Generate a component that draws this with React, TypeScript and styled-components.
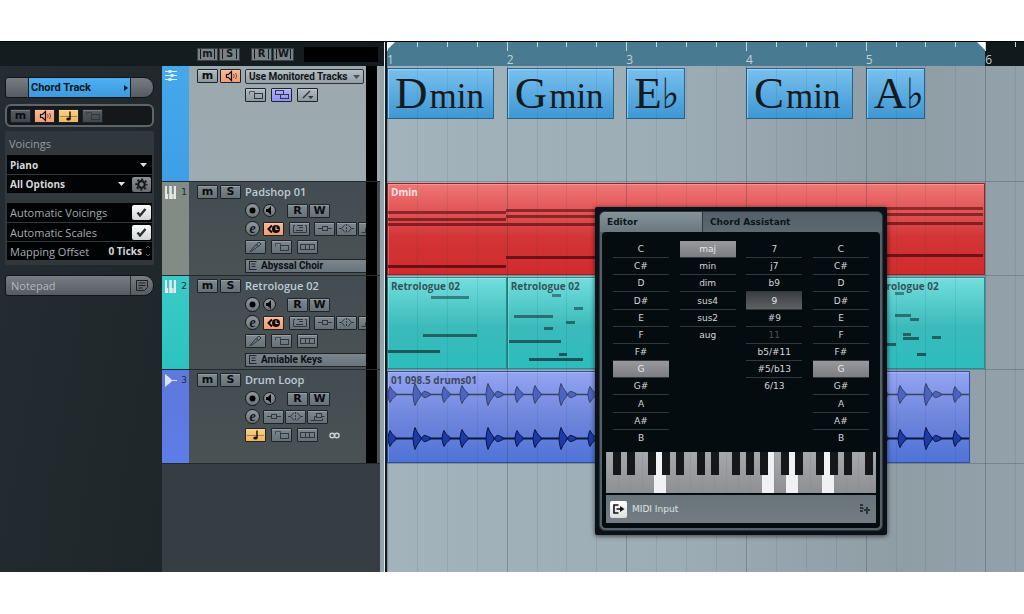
import React from "react";
import styled, { createGlobalStyle, css } from "styled-components";

const UI = `"Open Sans", "Noto Sans", sans-serif`;
const GRANDE = `"DejaVu Sans", "Noto Sans", sans-serif`;
const COMPACT = `Roboto, "Open Sans", sans-serif`;

const GlobalStyle = createGlobalStyle`
  *, *::before, *::after { box-sizing: border-box; }
  body { margin: 0; background: #fff; font-family: ${UI}; font-size: 11px; }
  button, input, select { font: inherit; color: inherit; margin: 0; padding: 0; border: 0; border-radius: 0; background: none; }
  button { cursor: pointer; }
  svg { display: block; }
`;

/* ---------- shell ---------- */

const Page = styled.div`
  min-height: 100vh;
  padding: 41px 0 42px;
  display: flex;
`;

const Workspace = styled.main`
  flex: 1;
  min-width: 0;
  display: flex;
  border-top: 1px solid #000;
  background: #22292e;
`;

/* ---------- icons ---------- */

type IconName =
  | "speaker" | "note" | "lock" | "layers" | "wand" | "freeze" | "list"
  | "insert" | "eq" | "sends" | "tool" | "lanes";

const icons: Record<IconName, React.ReactNode> = {
  speaker: (
    <>
      <path d="M5.500 4.500h2l3-3v9l-3-3h-2z" strokeWidth="1.2" />
      <path d="M12.500 4q1.500 2 0 4M14.500 3q2.400 3 0 6" strokeOpacity=".55" />
    </>
  ),
  note: (
    <>
      <path d="M1 6.500h17" strokeOpacity=".35" />
      <path d="M11 1.500v7.500" strokeWidth="1.4" />
      <ellipse cx="9.500" cy="9" rx="2.200" ry="1.500" fill="currentColor" stroke="none" />
    </>
  ),
  lock: (
    <>
      <path d="M3.500 5.500V2.500h5v2" strokeOpacity=".7" />
      <rect x="8.500" y="4.500" width="8" height="5" />
    </>
  ),
  layers: (
    <>
      <rect x="3.500" y="1.500" width="8" height="4" />
      <rect x="8.500" y="5.500" width="8" height="4" />
    </>
  ),
  wand: (
    <>
      <path d="M5 9l7-7" strokeWidth="1.4" />
      <path d="M10 7h5.500L12.800 10z" fill="currentColor" stroke="none" />
    </>
  ),
  freeze: (
    <>
      <path d="M8 2.500L4.500 6 8 9.500" strokeWidth="2" />
      <circle cx="12" cy="6" r="4" fill="currentColor" stroke="none" />
      <path d="M12 3.500v3h2.500" stroke="#f5a77f" strokeWidth="1.200" />
    </>
  ),
  list: (
    <>
      <path d="M5 2.500H3.500v7h13v-7H15" />
      <path d="M7 2.500h6M9 4.500h4M6 7.500h7" />
    </>
  ),
  insert: (
    <>
      <path d="M3 5.500h4.500M12.500 5.500H17" />
      <rect x="7.500" y="3.500" width="5" height="4" />
    </>
  ),
  eq: (
    <>
      <path d="M2 5.500h2.500M14.500 5.500h2.500M8 1.500L4.500 5.500 8 9.500M11 1.500l3.500 4L11 9.500" />
      <path d="M9.500 1v9" strokeDasharray="2 1" />
    </>
  ),
  sends: (
    <>
      <path d="M2.500 9.500h12V7.500M6.500 9.500v-4h2M13.500 5.500h3" />
      <rect x="8.500" y="2.500" width="5" height="4" />
    </>
  ),
  tool: (
    <>
      <path d="M4 10.500l6-7 2 2-7 5z" />
      <path d="M10.500 3L13 1l2 2-2.500 2.500z" />
    </>
  ),
  lanes: (
    <>
      <rect x="2.500" y="3.500" width="14" height="5" />
      <path d="M7.500 3.500v5M11.500 3.500v5" />
    </>
  ),
};

const Icon = ({ name }: { name: IconName }) => (
  <svg width="19" height="12" viewBox="0 0 19 12" fill="none" stroke="currentColor" aria-hidden="true">
    {icons[name]}
  </svg>
);

/* ---------- shared controls ---------- */

type Tone = "steel" | "light" | "dark" | "orange" | "yellow" | "violet";

const tones: Record<Tone, string> = {
  steel: "linear-gradient(#7e888f, #667077)",
  light: "linear-gradient(#b0bbc2, #8d989f)",
  dark: "linear-gradient(#545b61, #41484d)",
  orange: "linear-gradient(#fbb893, #f49c70)",
  yellow: "linear-gradient(#f9cf85, #efb75c)",
  violet: "linear-gradient(#b0b2ff, #8f92f4)",
};

const Key = styled.button<{ $tone?: Tone; $joined?: boolean; $dim?: boolean }>`
  flex: none;
  width: 21px;
  height: 14px;
  display: grid;
  place-items: center;
  overflow: hidden;
  border: 1px solid #1d2326;
  border-radius: 1px;
  background: ${(p) => tones[p.$tone ?? "steel"]};
  box-shadow: inset 0 1px 0 rgba(255, 255, 255, 0.2);
  color: ${(p) => (p.$dim ? "#30383d" : "#0b0d0f")};
  font: 700 11px/10px ${GRANDE};
  ${(p) => p.$joined && css`& + & { margin-left: 1px; }`}
`;

const RoundKey = styled.button<{ $small?: boolean }>`
  flex: none;
  width: ${(p) => (p.$small ? 13 : 15)}px;
  height: ${(p) => (p.$small ? 13 : 15)}px;
  display: grid;
  place-items: center;
  border: 1px solid #14181a;
  border-radius: 50%;
  background: linear-gradient(#8f989e, #69737a);
  color: #101214;
  font: italic 700 14px/10px "Liberation Serif", serif;
`;

const Stack = styled.span`
  display: grid;
  align-items: center;
  & > * { grid-area: 1 / 1; }
  & > svg { justify-self: end; pointer-events: none; }
`;

/* ---------- inspector ---------- */

const Inspector = styled.aside`
  flex: 0 0 162px;
  background: linear-gradient(100deg, #262d32, #1e262a);
`;

const Strip = styled.div`
  height: 24px;
  background: #141c20;
`;

const InspectorBody = styled.div`
  padding: 11px 8px 0 5px;
  display: flex;
  flex-direction: column;
`;

const Pill = styled.div`
  display: flex;
  height: 21px;
  border: 1px solid #101416;
  border-radius: 3px 10px 10px 3px;
  overflow: hidden;
  background: linear-gradient(#777d82, #555b60);
`;

const PillCap = styled.button`
  width: 22px;
  display: grid;
  place-items: center;
  color: #1c2023;
`;

const PillName = styled.button`
  flex: 1;
  display: flex;
  align-items: center;
  justify-content: space-between;
  padding: 0 2px;
  border: solid #14181a;
  border-width: 0 1px;
  background: linear-gradient(#4fb0f0, #3c9ae0);
  color: #0a1720;
  font: 700 11px/14px ${COMPACT};
`;

const NotepadName = styled.button`
  flex: 1;
  padding-left: 5px;
  border-right: 1px solid #2a2f32;
  text-align: left;
  color: #b4babd;
`;

const ControlBox = styled.div`
  height: 23px;
  margin-top: 6px;
  padding: 0 3px;
  display: flex;
  align-items: center;
  gap: 2px;
  border: 2px solid #5d6569;
  border-radius: 6px;
  background: #14181b;
`;

const Section = styled.section`
  margin: 4px 0 10px;
  padding: 1px 2px 5px;
  border-radius: 2px;
  background: #31383d;
`;

const SectionTitle = styled.h2`
  margin: 0;
  padding-left: 2px;
  font: 400 11px/23px ${UI};
  color: #949b9f;
`;

const Fields = styled.div`
  margin-bottom: 10px;
  background: #020304;
  &:last-child { margin-bottom: 0; }
`;

const Field = styled.div`
  height: 19px;
  padding: 0 1px 0 3px;
  display: flex;
  align-items: center;
  gap: 3px;
  color: #a4abaf;
  & + & { border-top: 1px solid #32383b; }
  label { flex: 1; white-space: nowrap; }
`;

const FieldPicker = styled(Stack)`
  flex: 1;
  padding-right: 4px;
`;

const FieldSelect = styled.select`
  width: 100%;
  appearance: none;
  outline: 0;
  font-size: 10px;
  font-weight: 700;
  color: #d3d8da;
`;

const GearButton = styled.button`
  width: 19px;
  height: 15px;
  display: grid;
  place-items: center;
  border-radius: 2px;
  background: linear-gradient(#8a9094, #666c70);
  color: #14171a;
`;

const Check = styled(Stack)`
  width: 19px;
  height: 15px;
  & > svg { justify-self: center; }
  input {
    appearance: none;
    width: 19px;
    height: 15px;
    border-radius: 2px;
    background: linear-gradient(#fafafa, #d2d5d7);
  }
`;

const OffsetInput = styled.input`
  width: 40px;
  text-align: right;
  font-size: 10px;
  font-weight: 700;
  color: #d3d8da;
`;

const Caret = ({ color = "#dfe3e5" }: { color?: string }) => (
  <svg width="7" height="4" viewBox="0 0 7 4" aria-hidden="true">
    <path d="M0 0h7L3.500 4z" fill={color} />
  </svg>
);

const CheckField = ({ id, text }: { id: string; text: string }) => (
  <Field>
    <label htmlFor={id}>{text}</label>
    <Check>
      <input id={id} type="checkbox" defaultChecked />
      <svg width="11" height="9" viewBox="0 0 11 9" fill="none" stroke="#2b3033" strokeWidth="2.400">
        <path d="M1.500 4.500L4 7.500 9.500 1" />
      </svg>
    </Check>
  </Field>
);

const InspectorPanel = () => (
  <Inspector>
    <Strip />
    <InspectorBody>
      <Pill>
        <PillCap aria-label="Edit track" />
        <PillName>
          Chord Track
          <svg width="4" height="6" viewBox="0 0 4 6"><path d="M0 0l4 3-4 3z" fill="#0a1720" /></svg>
        </PillName>
        <PillCap aria-label="Track options" />
      </Pill>
      <ControlBox>
        <Key $tone="dark" aria-label="Mute">m</Key>
        <Key $tone="orange" aria-label="Acoustic feedback"><Icon name="speaker" /></Key>
        <Key $tone="yellow" aria-label="Musical mode"><Icon name="note" /></Key>
        <Key $tone="dark" $dim aria-label="Lock"><Icon name="lock" /></Key>
      </ControlBox>
      <Section>
        <SectionTitle>Voicings</SectionTitle>
        <Fields>
          <Field>
            <FieldPicker>
              <FieldSelect aria-label="Voicing library"><option>Piano</option></FieldSelect>
              <Caret />
            </FieldPicker>
          </Field>
          <Field>
            <FieldPicker>
              <FieldSelect aria-label="Voicing subset"><option>All Options</option></FieldSelect>
              <Caret />
            </FieldPicker>
            <GearButton aria-label="Configure voicings">
              <svg width="13" height="13" viewBox="0 0 13 13" fill="none" stroke="currentColor">
                <circle cx="6.500" cy="6.500" r="3.300" strokeWidth="2.200" />
                <circle cx="6.500" cy="6.500" r="5.200" strokeWidth="1.800" strokeDasharray="2 2.084" strokeDashoffset="1" />
              </svg>
            </GearButton>
          </Field>
        </Fields>
        <Fields>
          <CheckField id="auto-voicings" text="Automatic Voicings" />
          <CheckField id="auto-scales" text="Automatic Scales" />
          <Field>
            <label htmlFor="offset">Mapping Offset</label>
            <OffsetInput id="offset" defaultValue="0 Ticks" />
            <svg width="6" height="12" viewBox="0 0 6 12" fill="none" stroke="#5a6165">
              <path d="M1 3l2-2 2 2M1 9l2 2 2-2" />
            </svg>
          </Field>
        </Fields>
      </Section>
      <Pill>
        <NotepadName>Notepad</NotepadName>
        <PillCap aria-label="Open notepad">
          <svg width="12" height="11" viewBox="0 0 12 11" fill="none" stroke="currentColor">
            <path d="M.5.5h11v7l-3 3h-8zM2.500 3h7M2.500 5.500h7M2.500 8h4" />
          </svg>
        </PillCap>
      </Pill>
    </InspectorBody>
  </Inspector>
);

/* ---------- track list ---------- */

const TrackList = styled.section`
  flex: 0 0 218px;
  background: #363e44;
`;

const ListHeader = styled.header`
  height: 24px;
  padding: 0 2px 0 35px;
  display: flex;
  align-items: center;
  background: #141c20;
`;

const HeaderKey = styled.button`
  flex: none;
  width: 21px;
  height: 13px;
  margin-right: 1px;
  background: #7b8285;
  border: 1px solid #3b4245;
  color: #14191c;
  font: 700 10px/10px ${GRANDE};
  text-align: center;
  white-space: nowrap;
  &:nth-of-type(2) { margin-right: 11px; }
`;

const HeaderGlyph = styled.span`
  display: block;
  margin: 0 2px;
  border: solid #14191c;
  border-width: 0 1px;
`;

const Counter = styled.output`
  flex: 1;
  height: 15px;
  margin-left: 9px;
  background: #000;
`;

const TrackRow = styled.article<{ $selected?: boolean }>`
  height: ${(p) => (p.$selected ? 116 : 94)}px;
  display: grid;
  grid-template-columns: 27px 1fr 11px 3px;
  background: ${(p) => (p.$selected ? "linear-gradient(#9ba8ae, #9eabb1)" : "linear-gradient(#434c52, #4b5254)")};
  border-bottom: 1px solid #23292c;
`;

const ColorTab = styled.div<{ $color: string }>`
  padding: 4px 2px 0 3px;
  display: flex;
  align-items: flex-start;
  justify-content: space-between;
  background: ${(p) => p.$color};
  font: 9px/12px ${GRANDE};
  color: #262c2e;
`;

const Meter = styled.div`background: #000;`;

const TrackBody = styled.div`
  padding-left: 8px;
  display: grid;
  grid-template-columns: 48px 1fr;
  overflow: hidden;
`;

const MuteSolo = styled.div`
  padding-top: 3px;
  display: flex;
  align-items: flex-start;
  gap: 1px;
`;

const Lines = styled.div`
  height: 93px;
  padding-top: 1px;
  display: grid;
  grid-template-rows: repeat(5, 1fr);
  min-width: 0;
`;

const ChordLines = styled.div`
  padding-top: 3px;
  display: flex;
  flex-direction: column;
  align-items: flex-start;
  gap: 4px;
`;

const Line = styled.div<{ $gap?: number }>`
  display: flex;
  align-items: center;
  gap: ${(p) => p.$gap ?? 3}px;
  min-width: 0;
`;

const KeyGroup = styled.div<{ $indent?: number }>`
  display: flex;
  margin-left: ${(p) => p.$indent ?? 0}px;
`;

const TrackName = styled.h3`
  margin: 0;
  font: 600 11px/14px ${UI};
  color: #bccbd4;
`;

const Preset = styled.button`
  flex: 1;
  height: 14px;
  padding-left: 3px;
  display: flex;
  align-items: center;
  gap: 4px;
  border: 1px solid #1d2326;
  border-right: 0;
  background: linear-gradient(#7b858c, #69737b);
  font: 700 10px/12px ${COMPACT};
  color: #0c0f11;
`;

const SourcePicker = styled(Stack)`
  width: 119px;
  height: 15px;
  padding: 0 3px 0 3px;
  border: 1px solid #2b3135;
  border-radius: 2px;
  background: linear-gradient(#b3bec5, #939ea5);
  select {
    appearance: none;
    width: 100%;
    height: 13px;
    font: 700 10px/13px ${COMPACT};
    color: #111518;
  }
`;

const PianoIcon = () => (
  <svg width="11" height="13" viewBox="0 0 11 13" fill="#e3e8e8" aria-hidden="true">
    <path d="M0 0h2v8h1.200v5H0zM4.200 0h2.600v8h1v5H4.200V8zM8.800 0H11v13H8.300V8h.5z" />
  </svg>
);

const WaveIcon = () => (
  <svg width="12" height="13" viewBox="0 0 12 13" fill="#dbe2ff" aria-hidden="true">
    <path d="M0 0l5 4 2 2h5v1H7L5 9l-5 4z" />
  </svg>
);

const ChordIcon = () => (
  <svg width="12" height="11" viewBox="0 0 12 11" fill="#d9edfb" stroke="#d9edfb" aria-hidden="true">
    <path d="M0 1.500h12M0 5.500h12M0 9.500h12" strokeWidth="1" />
    <ellipse cx="5" cy="1.500" rx="2" ry="1" /><ellipse cx="7" cy="5.500" rx="2" ry="1" /><ellipse cx="5" cy="9.500" rx="2" ry="1" />
  </svg>
);

type Track = { no: number; name: string; color: string; preset?: string };

const tracks: Track[] = [
  { no: 1, name: "Padshop 01", color: "#838b86", preset: "Abyssal Choir" },
  { no: 2, name: "Retrologue 02", color: "linear-gradient(#3acbc8, #2cc3bf)", preset: "Amiable Keys" },
  { no: 3, name: "Drum Loop", color: "linear-gradient(#5f78dc, #5d7de8)" },
];

const MixKeys = () => (
  <>
    <Key $dim $joined aria-label="Inserts"><Icon name="insert" /></Key>
    <Key $dim $joined aria-label="Equalizer"><Icon name="eq" /></Key>
    <Key $dim $joined aria-label="Sends"><Icon name="sends" /></Key>
  </>
);

const TrackItem = ({ track }: { track: Track }) => (
  <TrackRow>
    <ColorTab $color={track.color}>
      {track.preset ? <PianoIcon /> : <WaveIcon />}
      {track.no}
    </ColorTab>
    <TrackBody>
      <MuteSolo>
        <Key aria-label="Mute">m</Key>
        <Key aria-label="Solo">S</Key>
      </MuteSolo>
      <Lines>
        <Line><TrackName>{track.name}</TrackName></Line>
        <Line>
          <RoundKey aria-label="Record enable">
            <svg width="7" height="7" viewBox="0 0 7 7"><circle cx="3.500" cy="3.500" r="3" /></svg>
          </RoundKey>
          <RoundKey $small aria-label="Monitor">
            <svg width="7" height="9" viewBox="0 0 7 9"><path d="M0 3h2l3-3v9L2 6H0z" /></svg>
          </RoundKey>
          <KeyGroup $indent={8}>
            <Key $joined aria-label="Read automation">R</Key>
            <Key $joined aria-label="Write automation">W</Key>
          </KeyGroup>
        </Line>
        <Line>
          <RoundKey aria-label="Edit channel settings">e</RoundKey>
          {track.preset ? (
            <>
              <Key $tone="orange" aria-label="Freeze"><Icon name="freeze" /></Key>
              <KeyGroup $indent={2}><Key $dim aria-label="Input transformer"><Icon name="list" /></Key></KeyGroup>
              <KeyGroup $indent={1}><MixKeys /></KeyGroup>
            </>
          ) : (
            <KeyGroup><MixKeys /></KeyGroup>
          )}
        </Line>
        <Line $gap={4}>
          {track.preset ? (
            <Key $dim aria-label="Drum map"><Icon name="tool" /></Key>
          ) : (
            <Key $tone="yellow" aria-label="Musical mode"><Icon name="note" /></Key>
          )}
          <Key $dim aria-label="Lock"><Icon name="lock" /></Key>
          <Key $dim aria-label="Show lanes"><Icon name="lanes" /></Key>
          {!track.preset && (
            <KeyGroup $indent={7}>
              <svg width="11" height="7" viewBox="0 0 11 7" fill="none" stroke="#c9d1d5" strokeWidth="1.400">
                <circle cx="3.200" cy="3.500" r="2.300" /><circle cx="7.800" cy="3.500" r="2.300" />
              </svg>
            </KeyGroup>
          )}
        </Line>
        {track.preset && (
          <Line>
            <Preset>
              <svg width="8" height="9" viewBox="0 0 8 9" fill="none" stroke="#20262a">
                <path d="M.5 0v9M.5.5h7M2.500 3h4M2.500 5.500h4M.5 8.500h7" />
              </svg>
              {track.preset}
            </Preset>
          </Line>
        )}
      </Lines>
    </TrackBody>
    <Meter />
    <span />
  </TrackRow>
);

const Tracks = () => (
  <TrackList>
    <ListHeader>
      <HeaderKey aria-label="Mute all"><HeaderGlyph>m</HeaderGlyph></HeaderKey>
      <HeaderKey aria-label="Solo all"><HeaderGlyph>S</HeaderGlyph></HeaderKey>
      <HeaderKey aria-label="Read all"><HeaderGlyph>R</HeaderGlyph></HeaderKey>
      <HeaderKey aria-label="Write all"><HeaderGlyph>W</HeaderGlyph></HeaderKey>
      <Counter />
    </ListHeader>
    <TrackRow $selected>
      <ColorTab $color="linear-gradient(#46a8ea, #3e9fe8)"><ChordIcon /></ColorTab>
      <TrackBody>
        <MuteSolo>
          <Key $tone="light" aria-label="Mute">m</Key>
          <Key $tone="orange" aria-label="Acoustic feedback"><Icon name="speaker" /></Key>
        </MuteSolo>
        <ChordLines>
          <SourcePicker>
            <select aria-label="Audition source"><option>Use Monitored Tracks</option></select>
            <Caret color="#4a5156" />
          </SourcePicker>
          <Line $gap={4}>
            <Key $tone="light" $dim aria-label="Lock"><Icon name="lock" /></Key>
            <Key $tone="violet" $dim aria-label="Resolve display conflicts"><Icon name="layers" /></Key>
            <Key $tone="light" $dim aria-label="Show scales"><Icon name="wand" /></Key>
          </Line>
        </ChordLines>
      </TrackBody>
      <Meter />
      <span />
    </TrackRow>
    {tracks.map((t) => <TrackItem key={t.no} track={t} />)}
  </TrackList>
);

const Splitter = styled.div`
  flex: 0 0 7px;
  border-right: 2px solid #14191c;
  background: linear-gradient(to right, #94a2aa 4px, #e4eaed 4px);
  &::before {
    content: "";
    display: block;
    width: 4px;
    height: 24px;
    background: #141c20;
  }
`;

/* ---------- arrangement ---------- */

const BEATS = Array.from({ length: 24 }, (_, i) => i);

const Arrange = styled.section`
  flex: 1;
  min-width: 0;
  display: flex;
  position: relative;
  background: linear-gradient(to right, #a2b3bb 0, #9dadb5 45%, #8f9da5 80%, #93a2aa 100%);
`;

const Viewport = styled.div`
  flex: 1;
  min-width: 0;
  overflow: hidden;
  display: flex;
`;

const Timeline = styled.div`
  flex: none;
  width: 718px;
  display: flex;
  flex-direction: column;
`;

const Ruler = styled.div`
  height: 24px;
  display: grid;
  grid-template-columns: repeat(24, 1fr);
  background: #12191d;
`;

const RulerCell = styled.div<{ $bar: boolean; $active: boolean }>`
  min-width: 0;
  padding-top: 12px;
  background:
    linear-gradient(#c9d6dc, #c9d6dc) 0 0 / 1px ${(p) => (p.$bar ? 9 : 5)}px no-repeat,
    ${(p) => (p.$active ? "#487a91" : "#12191d")};
  font: 12px/12px ${UI};
  color: #c3d0d6;
`;

const Locator = styled.svg<{ $end?: boolean }>`
  position: absolute;
  top: 0;
  left: ${(p) => (p.$end ? "590px" : "0")};
`;

const Lanes = styled.div`
  flex: 1;
  position: relative;
`;

const GridOverlay = styled.div`
  position: absolute;
  inset: 0;
  display: grid;
  grid-template-columns: repeat(24, 1fr);
  pointer-events: none;
`;

const GridLine = styled.i<{ $bar: boolean }>`
  border-left: 1px solid ${(p) => (p.$bar ? "rgba(40, 62, 74, .3)" : "rgba(40, 62, 74, .1)")};
`;

const Lane = styled.div<{ $chords?: boolean }>`
  height: ${(p) => (p.$chords ? 116 : 94)}px;
  padding-top: ${(p) => (p.$chords ? 2 : 1)}px;
  display: grid;
  grid-template-columns: repeat(24, 1fr);
  align-items: start;
  border-bottom: 1px solid rgba(60, 80, 90, 0.35);
`;

const ChordEvent = styled.button<{ $start: number; $wide?: boolean }>`
  grid-column: ${(p) => p.$start * 4 + 1} / span 4;
  width: ${(p) => (p.$wide ? 107 : 59)}px;
  height: 51px;
  padding: 0 7px;
  display: flex;
  align-items: baseline;
  gap: ${(p) => (p.$wide ? 2 : 0)}px;
  border: 1px solid #23648f;
  box-shadow: inset 1px 1px 0 rgba(170, 220, 250, 0.7);
  background: linear-gradient(#78c0ee, #3e97d4);
  font: 45px/49px "Liberation Serif", serif;
  color: #171a1c;
`;

const Quality = styled.span`font-size: 35px;`;
const Flat = styled.span`font: 42px/34px "DejaVu Serif Condensed", "DejaVu Serif", serif;`;

const clipTones = {
  red: "linear-gradient(#f07676, #d33436 60%, #d02c2e)",
  teal: "linear-gradient(#72dedd, #3bbaba 55%, #2cbdbd)",
  blue: "linear-gradient(#94a4f2, #6f86dc 50%, #5073d6)",
};

const Clip = styled.div<{ $tone: keyof typeof clipTones; $from: number; $beats: number; $trim?: number }>`
  grid-column: ${(p) => p.$from + 1} / span ${(p) => p.$beats};
  height: 92px;
  margin-right: ${(p) => p.$trim ?? 0}px;
  display: grid;
  overflow: hidden;
  border: 1px solid ${(p) => ({ red: "#a01e22", teal: "#1f8f90", blue: "#2f4aa8" })[p.$tone]};
  box-shadow: inset 1px 1px 0 rgba(255, 255, 255, 0.22);
  background: ${(p) => clipTones[p.$tone]};
  & > * { grid-area: 1 / 1; }
`;

const ClipLabel = styled.span<{ $light?: boolean }>`
  padding: 1px 0 0 3px;
  font: 700 10px/14px ${UI};
  white-space: nowrap;
  color: ${(p) => (p.$light ? "#f7e3e3" : "rgba(45, 55, 62, .85)")};
`;

type Note = [y: number, x1: number, x2: number];

const Notes = ({ notes, width, fill }: { notes: Note[]; width: number; fill: string }) => (
  <svg width={width} height="90" viewBox={`0 0 ${width} 90`} fill={fill}>
    {notes.map(([y, a, b], i) => (
      <rect key={i} x={a} y={y - 1} width={b - a} height="3" opacity={0.5 + (y / 90) * 0.45} />
    ))}
  </svg>
);

const padNotes: Note[] = [
  [28, 0, 118], [35, 0, 118], [40, 0, 118], [82, 0, 118],
  [26, 118, 358], [32, 118, 358], [40, 118, 358], [73, 118, 358],
  [24, 358, 595], [30, 358, 595], [39, 358, 595], [71, 358, 595],
];

const retroA: Note[] = [[19, 43, 81], [57, 35, 89], [73, 0, 52]];
const retroB: Note[] = [
  [17, 44, 53], [30, 66, 75], [38, 6, 45], [44, 58, 67], [50, 36, 45], [63, 1, 53], [76, 51, 59], [81, 21, 75],
];
const retroC: Note[] = [
  [15, 28, 37], [37, 28, 44], [41, 43, 52], [56, 36, 44], [60, 36, 52], [59, 65, 74], [66, 12, 29], [76, 50, 59],
];

const hits: [number, number][] = [[0, 11], [10, 4], [29, 8], [47, 9]];

const burst = (x: number, cy: number, a: number) => {
  const shape = a > 5
    ? [[-2, 1], [-1, a * 0.7], [0, a], [2, a * 0.6], [4, a * 0.35], [6, 1]]
    : [[-3, 1], [-1, a * 0.8], [1, a * 0.7], [5, 1]];
  const top = shape.map(([dx, h]) => `${x + dx} ${cy - h}`);
  const bottom = [...shape].reverse().map(([dx, h]) => `${x + dx} ${cy + h}`);
  return `M${[...top, ...bottom].join("L")}z`;
};

const wavePath = (cy: number) => {
  const peaks: [number, number][] = [[2, 8]];
  for (let k = 0; k < 8; k++) hits.forEach(([dx, a]) => peaks.push([27 + k * 73 + dx, a]));
  return peaks.filter(([x]) => x < 575).map(([x, a]) => burst(x, cy, a)).join("");
};

const Wave = () => (
  <svg width="581" height="90" viewBox="0 0 581 90">
    <g stroke="#3a425c" fill="#4a63c4">
      <path d="M0 22.500h581" strokeWidth="1.500" />
      <path d={wavePath(22.5)} />
    </g>
    <g stroke="#0b1440" fill="#1c3aa8">
      <path d="M0 66.500h581" strokeWidth="2" />
      <path d={wavePath(66.5)} />
    </g>
  </svg>
);

const RetroClip = ({ from, notes, label }: { from: number; notes: Note[]; label?: string }) => (
  <Clip $tone="teal" $from={from} $beats={4}>
    <Notes notes={notes} width={118} fill="#1b4a4e" />
    {label && <ClipLabel>{label}</ClipLabel>}
  </Clip>
);

/* ---------- chord editor window ---------- */

const Dialog = styled.section`
  position: absolute;
  top: 165px;
  left: 208px;
  width: 292px;
  padding: 4px;
  border-radius: 2px;
  background: #0a1217;
  box-shadow: 0 1px 5px rgba(0, 0, 0, 0.65);
  font-family: ${GRANDE};
  font-size: 9px;
`;

const DialogFrame = styled.div`
  padding: 0 2px 2px;
  border: 1px solid #2b3439;
  border-radius: 6px;
  background: #556168;
`;

const TabBar = styled.div`
  display: flex;
  height: 20px;
  margin: 0 -2px;
`;

const Tab = styled.button<{ $active?: boolean }>`
  flex: ${(p) => (p.$active ? "0 0 103px" : "1")};
  padding: 0 7px;
  border-radius: ${(p) => (p.$active ? "5px 0 0 0" : "0 5px 0 0")};
  border-right: ${(p) => (p.$active ? "1px solid #2c353a" : "0")};
  background: ${(p) => (p.$active ? "linear-gradient(#84929a, #6a777e)" : "linear-gradient(#53606a, #5d6970)")};
  font-weight: 700;
  text-align: left;
  color: #0e1519;
`;

const DialogBody = styled.div`
  padding: 9px 4px 5px;
  border-radius: 4px;
  background: #050c10;
`;

const Columns = styled.div`
  height: 206px;
  margin-bottom: 5px;
  padding: 0 7px;
  display: flex;
  justify-content: space-between;
`;

const ChoiceColumn = styled.div`
  width: 56px;
  display: grid;
  grid-template-rows: repeat(12, 1fr);
`;

const Choice = styled.button<{ $state?: "on" | "soft" | "off" }>`
  border-bottom: 1px solid #30383c;
  color: ${(p) => (p.$state === "off" ? "#4b5255" : p.$state ? "#e6e8e9" : "#d2d6d8")};
  background: ${(p) =>
    p.$state === "on" ? "linear-gradient(#97999c, #7b7d80)" : p.$state === "soft" ? "linear-gradient(#3b3f42, #5d6164)" : "none"};
  &:last-child { border-bottom-color: transparent; }
`;

const DialogFooter = styled.footer`
  height: 28px;
  margin-top: 2px;
  padding: 0 5px 0 4px;
  display: flex;
  align-items: center;
  gap: 5px;
  background: linear-gradient(#69747a, #727c82);
  color: #dde2e4;
`;

const InputButton = styled.button`
  width: 17px;
  height: 17px;
  display: grid;
  place-items: center;
  border-radius: 2px;
  background: linear-gradient(#fff, #dcdfe0);
`;

const FooterIcon = styled.svg`margin-left: auto;`;

const roots = ["C", "C#", "D", "D#", "E", "F", "F#", "G", "G#", "A", "A#", "B"];
const columns: { label: string; items: string[]; on?: string; soft?: string; off?: string }[] = [
  { label: "Root note", items: roots, on: "G" },
  { label: "Chord type", items: ["maj", "min", "dim", "sus4", "sus2", "aug"], on: "maj" },
  { label: "Tension", items: ["7", "j7", "b9", "9", "#9", "11", "b5/#11", "#5/b13", "6/13"], soft: "9", off: "11" },
  { label: "Bass note", items: roots, on: "G" },
];

const whiteKeys = Array.from({ length: 23 }, (_, i) => i);
const litKeys = [4, 13, 15, 18];
const blackOffsets = [7, 21, 42, 56, 70];
const blackKeys = [0, 1, 2, 3].flatMap((o) => blackOffsets.map((x) => o * 84 + x)).filter((x) => x < 266);

const Keyboard = () => (
  <svg width="270" height="41" viewBox="0 0 270 41" role="img" aria-label="Chord voicing keyboard">
    <defs>
      <linearGradient id="ivory" x1="0" y1="0" x2="0" y2="1">
        <stop offset="0" stopColor="#a7a8ac" />
        <stop offset="1" stopColor="#8e8f93" />
      </linearGradient>
    </defs>
    <rect width="270" height="41" fill="url(#ivory)" />
    {whiteKeys.map((k) => (
      <rect key={k} x={k * 12} width="1" height="41" fill="#85868a" opacity=".3" />
    ))}
    {litKeys.map((k) => <rect key={k} x={k * 12} width="12" height="41" fill="#f1f1f3" />)}
    {blackKeys.map((x) => <rect key={x} x={x} width="8" height="23" fill="#161718" />)}
  </svg>
);

const ChordEditor = () => (
  <Dialog role="dialog" aria-label="Chord editor">
    <DialogFrame>
      <TabBar role="tablist">
        <Tab role="tab" aria-selected $active>Editor</Tab>
        <Tab role="tab" aria-selected={false}>Chord Assistant</Tab>
      </TabBar>
      <DialogBody>
        <Columns>
          {columns.map((c) => (
            <ChoiceColumn key={c.label} role="group" aria-label={c.label}>
              {c.items.map((t) => (
                <Choice key={t} $state={t === c.on ? "on" : t === c.soft ? "soft" : t === c.off ? "off" : undefined}>
                  {t}
                </Choice>
              ))}
            </ChoiceColumn>
          ))}
        </Columns>
        <Keyboard />
        <DialogFooter>
          <InputButton aria-label="Toggle MIDI input">
            <svg width="12" height="10" viewBox="0 0 12 10" fill="none" stroke="#101214" strokeWidth="1.600">
              <path d="M5.500 1H1v8h4.500M3.500 5H8" />
              <path d="M7 2l4.500 3L7 8z" fill="#101214" stroke="none" />
            </svg>
          </InputButton>
          MIDI Input
          <FooterIcon width="12" height="12" viewBox="0 0 12 12" fill="#2d3539">
            <path d="M1 1h3v2H1zM1 4h3v2H1zM1 7h3v2H1zM4 5h1v1H4zM7 4h2v2h2v2H9v3H7V8H5V6h2z" />
          </FooterIcon>
        </DialogFooter>
      </DialogBody>
    </DialogFrame>
  </Dialog>
);

const Arrangement = () => (
  <Arrange>
    <Viewport>
      <Timeline>
        <Ruler>
          {BEATS.map((b) => (
            <RulerCell key={b} $bar={b % 4 === 0} $active={b < 20}>{b % 4 === 0 ? b / 4 + 1 : null}</RulerCell>
          ))}
        </Ruler>
        <Lanes>
          <Lane $chords>
            <ChordEvent $start={0} $wide>D<Quality>min</Quality></ChordEvent>
            <ChordEvent $start={1} $wide>G<Quality>min</Quality></ChordEvent>
            <ChordEvent $start={2}>E<Flat>♭</Flat></ChordEvent>
            <ChordEvent $start={3} $wide>C<Quality>min</Quality></ChordEvent>
            <ChordEvent $start={4}>A<Flat>♭</Flat></ChordEvent>
          </Lane>
          <Lane>
            <Clip $tone="red" $from={0} $beats={20}>
              <Notes notes={padNotes} width={596} fill="#5e0d12" />
              <ClipLabel $light>Dmin</ClipLabel>
            </Clip>
          </Lane>
          <Lane>
            <RetroClip from={0} notes={retroA} label="Retrologue 02" />
            <RetroClip from={4} notes={retroB} label="Retrologue 02" />
            <RetroClip from={8} notes={retroA} />
            <RetroClip from={12} notes={retroB} />
            <RetroClip from={16} notes={retroC} label="Retrologue 02" />
          </Lane>
          <Lane>
            <Clip $tone="blue" $from={0} $beats={20} $trim={15}>
              <Wave />
              <ClipLabel>01 098.5 drums01</ClipLabel>
            </Clip>
          </Lane>
          <GridOverlay>
            {BEATS.map((b) => <GridLine key={b} $bar={b % 4 === 0} />)}
          </GridOverlay>
        </Lanes>
      </Timeline>
    </Viewport>
    <Locator width="8" height="8" viewBox="0 0 8 8"><path d="M0 0h8L0 8z" fill="#fff" /></Locator>
    <Locator $end width="8" height="8" viewBox="0 0 8 8"><path d="M0 0h8v8z" fill="#fff" /></Locator>
    <ChordEditor />
  </Arrange>
);

export default function App() {
  return (
    <Page>
      <GlobalStyle />
      <Workspace>
        <InspectorPanel />
        <Tracks />
        <Splitter />
        <Arrangement />
      </Workspace>
    </Page>
  );
}
